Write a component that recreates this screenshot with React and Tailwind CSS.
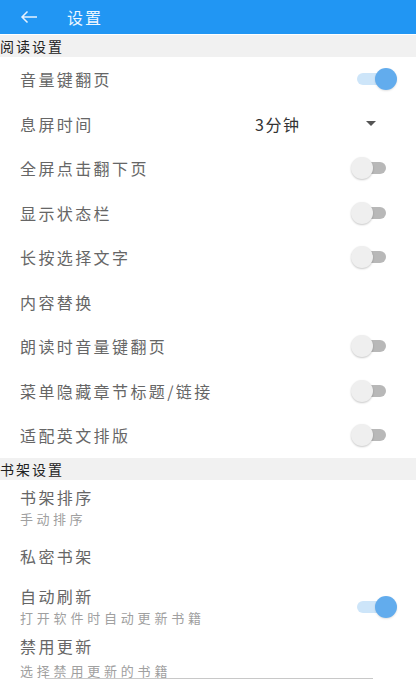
import React from "react";

const FONT = { fontFamily: '"Noto Sans CJK SC", "Noto Sans", sans-serif' };

function Toggle({ on }) {
  return (
    <div className="relative w-[46px] h-[22px] shrink-0">
      {on ? (
        <>
          <div className="absolute left-[6px] right-[7px] top-[5px] h-[12px] rounded-full bg-[#cde5f9]" />
          <div className="absolute right-0 top-0 w-[22px] h-[22px] rounded-full bg-[#62aced] shadow-[0_1px_2px_rgba(0,0,0,0.12)]" />
        </>
      ) : (
        <>
          <div className="absolute left-[2px] right-[11px] top-[5px] h-[12px] rounded-full bg-[#b8b8b8]" />
          <div className="absolute left-0 top-0 w-[22px] h-[22px] rounded-full bg-[#efefef] shadow-[0_1px_2px_rgba(0,0,0,0.22)]" />
        </>
      )}
    </div>
  );
}

function Section({ title }) {
  return (
    <div className="h-[22px] bg-[#f1f1f1] flex items-center text-[14px] tracking-[2px] text-[#222] leading-none">
      {title}
    </div>
  );
}

function Row({ title, toggle }) {
  return (
    <div className="h-[44.5px] flex items-center justify-between pl-5 pr-[19px]">
      <span className="text-[16px] tracking-[2.4px] text-[#666] leading-none">{title}</span>
      {toggle !== undefined && <Toggle on={toggle} />}
    </div>
  );
}

export default function App() {
  return (
    <div className="w-[416px] h-[680px] bg-white overflow-hidden relative" style={FONT}>
      <div className="h-[34px] bg-[#2196f3] flex items-center">
        <svg width="18" height="14" viewBox="0 0 18 14" className="ml-[20px]">
          <path d="M17 7H2M7.5 1.5L2 7l5.5 5.5" fill="none" stroke="#e6f2fe" strokeWidth="1.5" />
        </svg>
        <span className="ml-[29px] text-[16px] tracking-[2px] text-[#eef6ff] leading-none">设置</span>
      </div>
      <div className="h-[1px]" />
      <Section title="阅读设置" />
      <Row title="音量键翻页" toggle={true} />
      <div className="h-[44.5px] flex items-center pl-5">
        <span className="w-[235px] text-[16px] tracking-[2.4px] text-[#666] leading-none">息屏时间</span>
        <span className="flex-1 text-[16px] tracking-[1.5px] text-[#333] leading-none">3分钟</span>
        <svg width="10" height="5" viewBox="0 0 10 5" className="mr-[40px]">
          <path d="M0 0h10L5 5z" fill="#555" />
        </svg>
      </div>
      <Row title="全屏点击翻下页" toggle={false} />
      <Row title="显示状态栏" toggle={false} />
      <Row title="长按选择文字" toggle={false} />
      <Row title="内容替换" />
      <Row title="朗读时音量键翻页" toggle={false} />
      <Row title="菜单隐藏章节标题/链接" toggle={false} />
      <Row title="适配英文排版" toggle={false} />
      <Section title="书架设置" />
      <div className="h-[58px] pl-5 pt-[6px] flex flex-col">
        <span className="h-[22px] flex items-center text-[16px] tracking-[2.4px] text-[#666]">书架排序</span>
        <span className="h-[18px] mt-[2px] flex items-center text-[13px] tracking-[3.5px] text-[#a0a0a0]">手动排序</span>
      </div>
      <div className="h-[37px] pl-5 flex items-center">
        <span className="text-[16px] tracking-[2.4px] text-[#666] leading-none">私密书架</span>
      </div>
      <div className="h-[59px] pl-5 pr-[19px] flex items-center justify-between">
        <div className="flex flex-col pt-[3px]">
          <span className="h-[22px] flex items-center text-[16px] tracking-[2.4px] text-[#666]">自动刷新</span>
          <span className="h-[18px] mt-[2px] flex items-center text-[13px] tracking-[3.8px] text-[#a0a0a0]">打开软件时自动更新书籍</span>
        </div>
        <div className="mt-[6px]">
          <Toggle on={true} />
        </div>
      </div>
      <div className="h-[47px] pl-5 pt-[1px] flex flex-col">
        <span className="h-[22px] flex items-center text-[16px] tracking-[2.4px] text-[#666]">禁用更新</span>
        <span className="h-[18px] mt-[5px] flex items-center text-[13px] tracking-[3.8px] text-[#a0a0a0]">选择禁用更新的书籍</span>
      </div>
      <div className="absolute left-[45px] w-[328px] bottom-[1px] h-[1px] bg-[#c8c8c8]" />
    </div>
  );
}
